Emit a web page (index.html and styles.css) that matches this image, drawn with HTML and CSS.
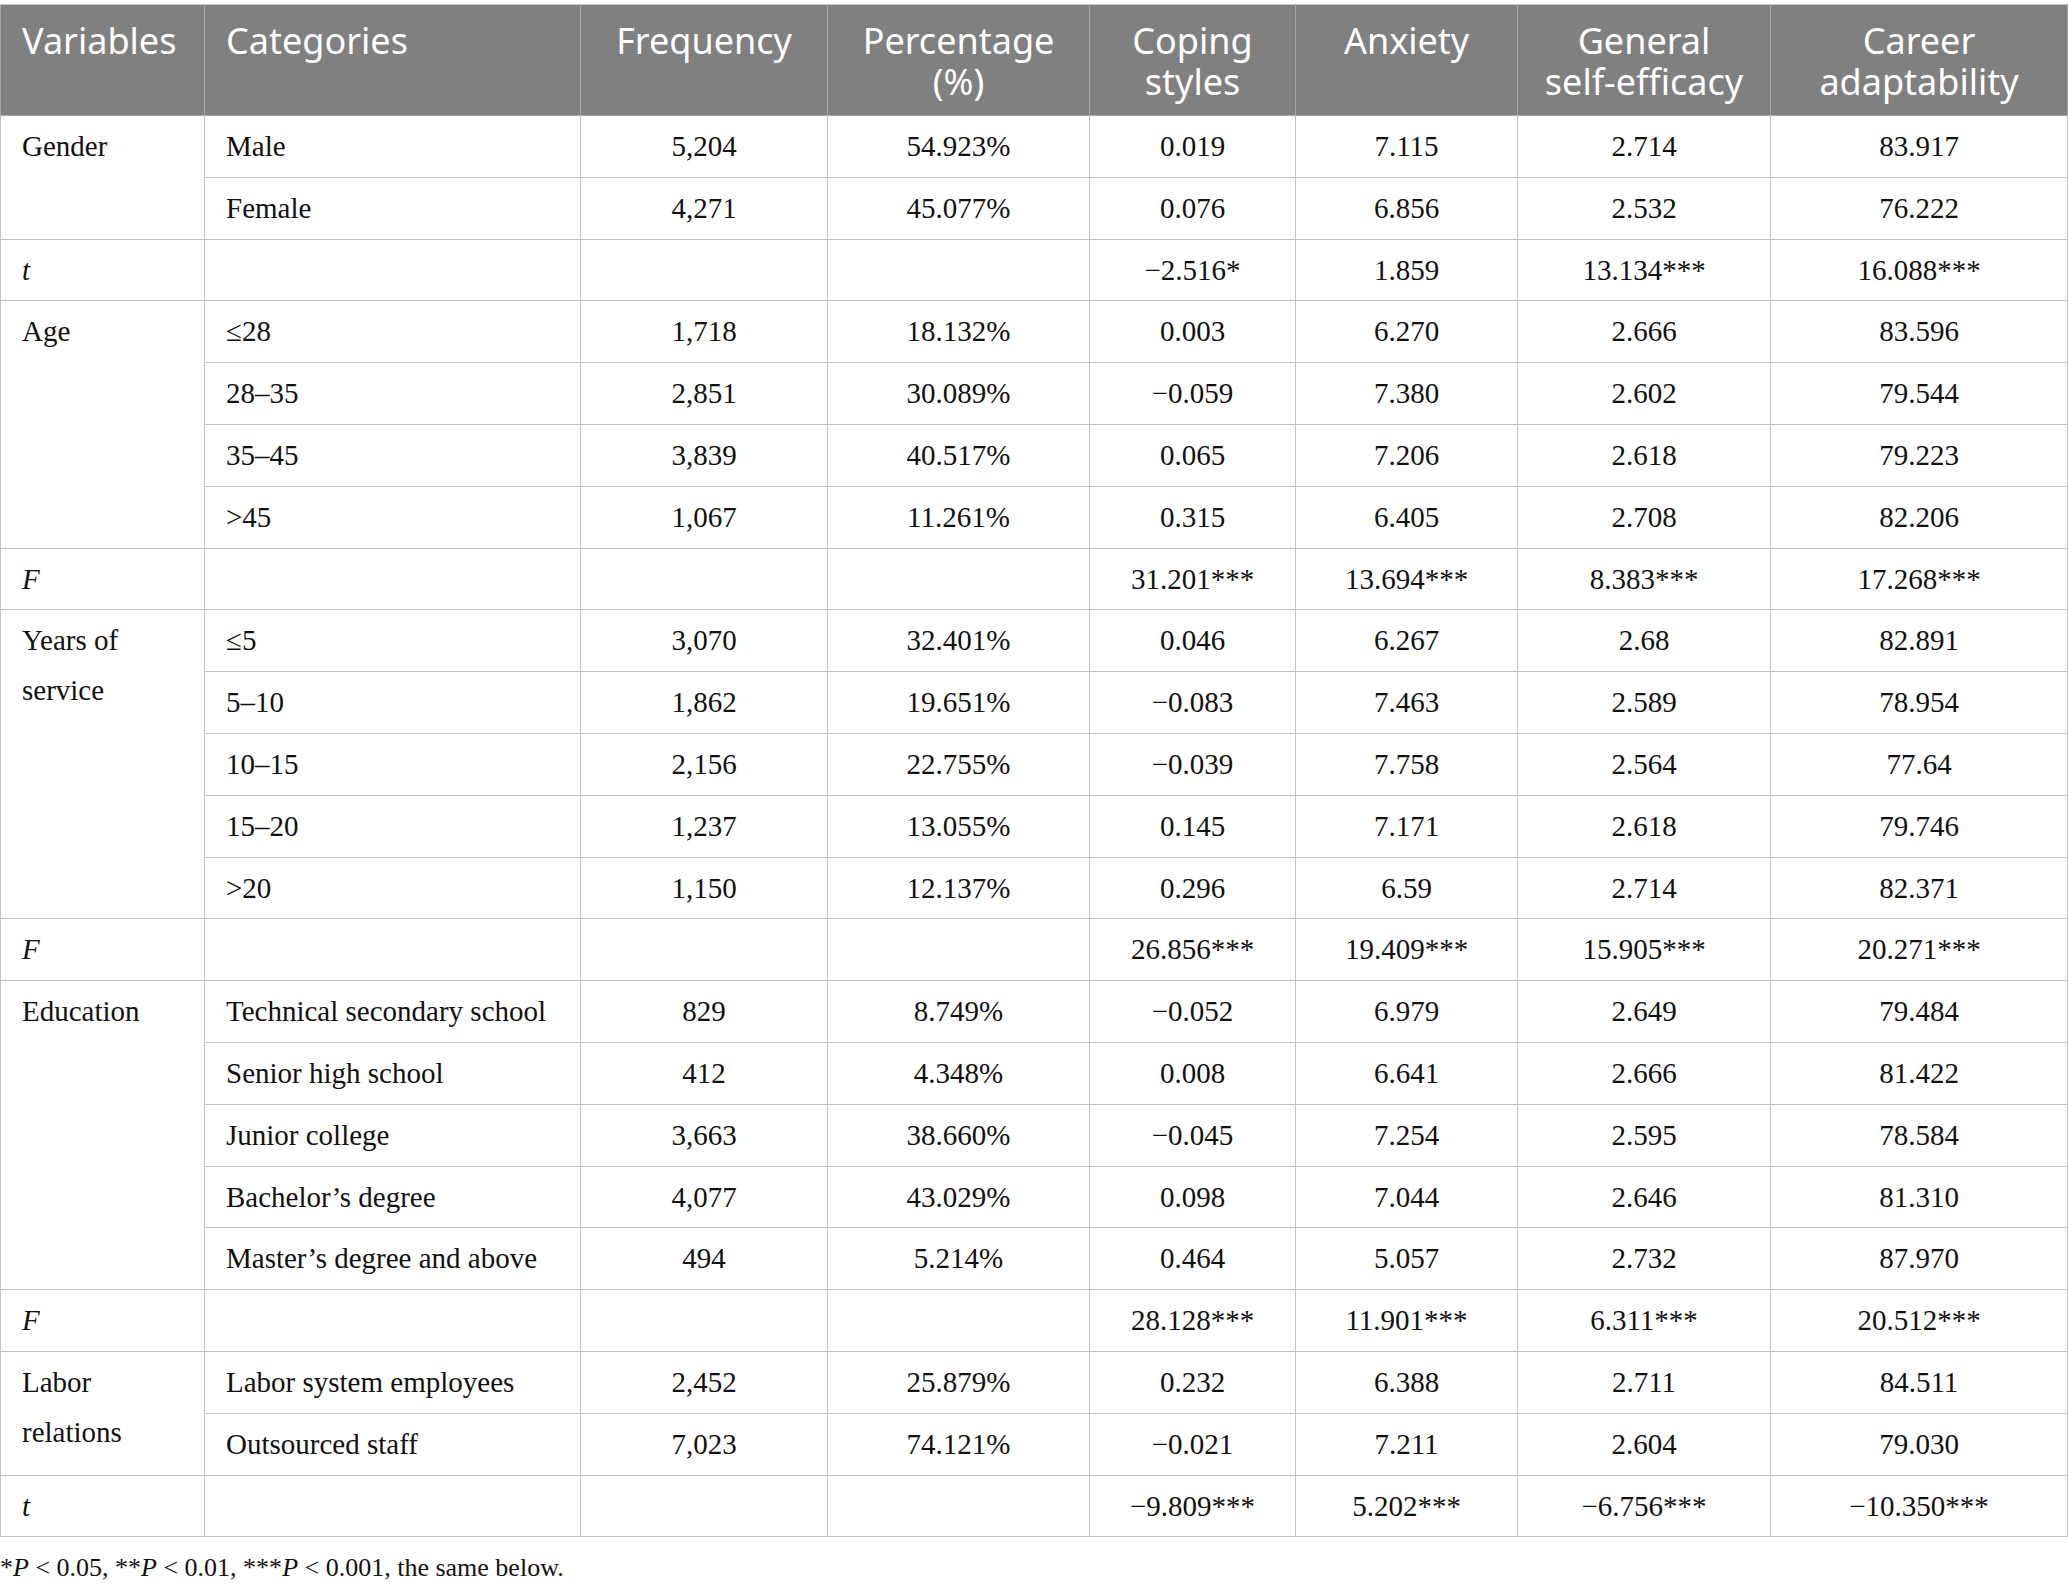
FILE: index.html
```html
<!DOCTYPE html>
<html lang="en">
<head>
<meta charset="utf-8">
<title>Table</title>
<link rel="stylesheet" href="styles.css">
</head>
<body>
<div class="page">
<table class="data">
<colgroup>
<col class="c1"><col class="c2"><col class="c3"><col class="c4"><col class="c5"><col class="c6"><col class="c7"><col class="c8">
</colgroup>
<thead>
<tr>
<th class="left">Variables</th>
<th class="left">Categories</th>
<th>Frequency</th>
<th><span class="ln">Percentage</span><span class="ln">(%)</span></th>
<th><span class="ln">Coping</span><span class="ln">styles</span></th>
<th>Anxiety</th>
<th><span class="ln">General</span><span class="ln">self-efficacy</span></th>
<th><span class="ln">Career</span><span class="ln">adaptability</span></th>
</tr>
</thead>
<tbody>
<tr><td class="var" rowspan="2">Gender</td><td class="cat">Male</td><td>5,204</td><td>54.923%</td><td>0.019</td><td>7.115</td><td>2.714</td><td>83.917</td></tr>
<tr><td class="cat">Female</td><td>4,271</td><td>45.077%</td><td>0.076</td><td>6.856</td><td>2.532</td><td>76.222</td></tr>
<tr><td class="var"><i>t</i></td><td class="cat"></td><td></td><td></td><td>−2.516*</td><td>1.859</td><td>13.134***</td><td>16.088***</td></tr>
<tr><td class="var" rowspan="4">Age</td><td class="cat">≤28</td><td>1,718</td><td>18.132%</td><td>0.003</td><td>6.270</td><td>2.666</td><td>83.596</td></tr>
<tr><td class="cat">28–35</td><td>2,851</td><td>30.089%</td><td>−0.059</td><td>7.380</td><td>2.602</td><td>79.544</td></tr>
<tr><td class="cat">35–45</td><td>3,839</td><td>40.517%</td><td>0.065</td><td>7.206</td><td>2.618</td><td>79.223</td></tr>
<tr><td class="cat">&gt;45</td><td>1,067</td><td>11.261%</td><td>0.315</td><td>6.405</td><td>2.708</td><td>82.206</td></tr>
<tr><td class="var"><i>F</i></td><td class="cat"></td><td></td><td></td><td>31.201***</td><td>13.694***</td><td>8.383***</td><td>17.268***</td></tr>
<tr><td class="var" rowspan="5">Years of<br>service</td><td class="cat">≤5</td><td>3,070</td><td>32.401%</td><td>0.046</td><td>6.267</td><td>2.68</td><td>82.891</td></tr>
<tr><td class="cat">5–10</td><td>1,862</td><td>19.651%</td><td>−0.083</td><td>7.463</td><td>2.589</td><td>78.954</td></tr>
<tr><td class="cat">10–15</td><td>2,156</td><td>22.755%</td><td>−0.039</td><td>7.758</td><td>2.564</td><td>77.64</td></tr>
<tr><td class="cat">15–20</td><td>1,237</td><td>13.055%</td><td>0.145</td><td>7.171</td><td>2.618</td><td>79.746</td></tr>
<tr><td class="cat">&gt;20</td><td>1,150</td><td>12.137%</td><td>0.296</td><td>6.59</td><td>2.714</td><td>82.371</td></tr>
<tr><td class="var"><i>F</i></td><td class="cat"></td><td></td><td></td><td>26.856***</td><td>19.409***</td><td>15.905***</td><td>20.271***</td></tr>
<tr><td class="var" rowspan="5">Education</td><td class="cat">Technical secondary school</td><td>829</td><td>8.749%</td><td>−0.052</td><td>6.979</td><td>2.649</td><td>79.484</td></tr>
<tr><td class="cat">Senior high school</td><td>412</td><td>4.348%</td><td>0.008</td><td>6.641</td><td>2.666</td><td>81.422</td></tr>
<tr><td class="cat">Junior college</td><td>3,663</td><td>38.660%</td><td>−0.045</td><td>7.254</td><td>2.595</td><td>78.584</td></tr>
<tr><td class="cat">Bachelor’s degree</td><td>4,077</td><td>43.029%</td><td>0.098</td><td>7.044</td><td>2.646</td><td>81.310</td></tr>
<tr><td class="cat">Master’s degree and above</td><td>494</td><td>5.214%</td><td>0.464</td><td>5.057</td><td>2.732</td><td>87.970</td></tr>
<tr><td class="var"><i>F</i></td><td class="cat"></td><td></td><td></td><td>28.128***</td><td>11.901***</td><td>6.311***</td><td>20.512***</td></tr>
<tr><td class="var" rowspan="2">Labor<br>relations</td><td class="cat">Labor system employees</td><td>2,452</td><td>25.879%</td><td>0.232</td><td>6.388</td><td>2.711</td><td>84.511</td></tr>
<tr><td class="cat">Outsourced staff</td><td>7,023</td><td>74.121%</td><td>−0.021</td><td>7.211</td><td>2.604</td><td>79.030</td></tr>
<tr><td class="var"><i>t</i></td><td class="cat"></td><td></td><td></td><td>−9.809***</td><td>5.202***</td><td>−6.756***</td><td>−10.350***</td></tr>
</tbody>
</table>
<p class="note">*<i>P</i> &lt; 0.05, **<i>P</i> &lt; 0.01, ***<i>P</i> &lt; 0.001, the same below.</p>
</div>
</body>
</html>
```

FILE: styles.css
```css
html, body {
  margin: 0;
  padding: 0;
  background: #ffffff;
}

.page {
  padding-top: 4px;
  width: 2067px;
}

.data {
  border-collapse: collapse;
  table-layout: fixed;
  width: 2067px;
  font-family: "Liberation Serif", "Times New Roman", serif;
  color: #111111;
}

.c1 { width: 204px; }
.c2 { width: 376px; }
.c3 { width: 247px; }
.c4 { width: 262px; }
.c5 { width: 206px; }
.c6 { width: 222px; }
.c7 { width: 253px; }
.c8 { width: 297px; }

.data th {
  background: #7f807f;
  color: #ffffff;
  font-family: "Noto Sans", "Open Sans", sans-serif;
  font-weight: 400;
  font-size: 36px;
  line-height: 41px;
  font-variant-ligatures: none;
  text-align: center;
  vertical-align: top;
  padding: 15px 10px 13px 10px;
  border: 1px solid #a6a6a6;
  border-top-color: #c4c4c4;
}

.data th .ln {
  display: block;
  height: 41px;
  overflow: visible;
}

.data th.left {
  text-align: left;
  padding-left: 21px;
}

.data td {
  font-size: 29px;
  line-height: 50px;
  text-align: center;
  vertical-align: top;
  padding: 5px 10px 5.8px 10px;
  border: 1px solid #c4c4c4;
}

.data td.var,
.data td.cat {
  text-align: left;
  padding-left: 21px;
}

.note {
  margin: 16px 0 0 0;
  font-family: "Liberation Serif", "Times New Roman", serif;
  font-size: 26px;
  line-height: 30px;
  color: #111111;
}
```
